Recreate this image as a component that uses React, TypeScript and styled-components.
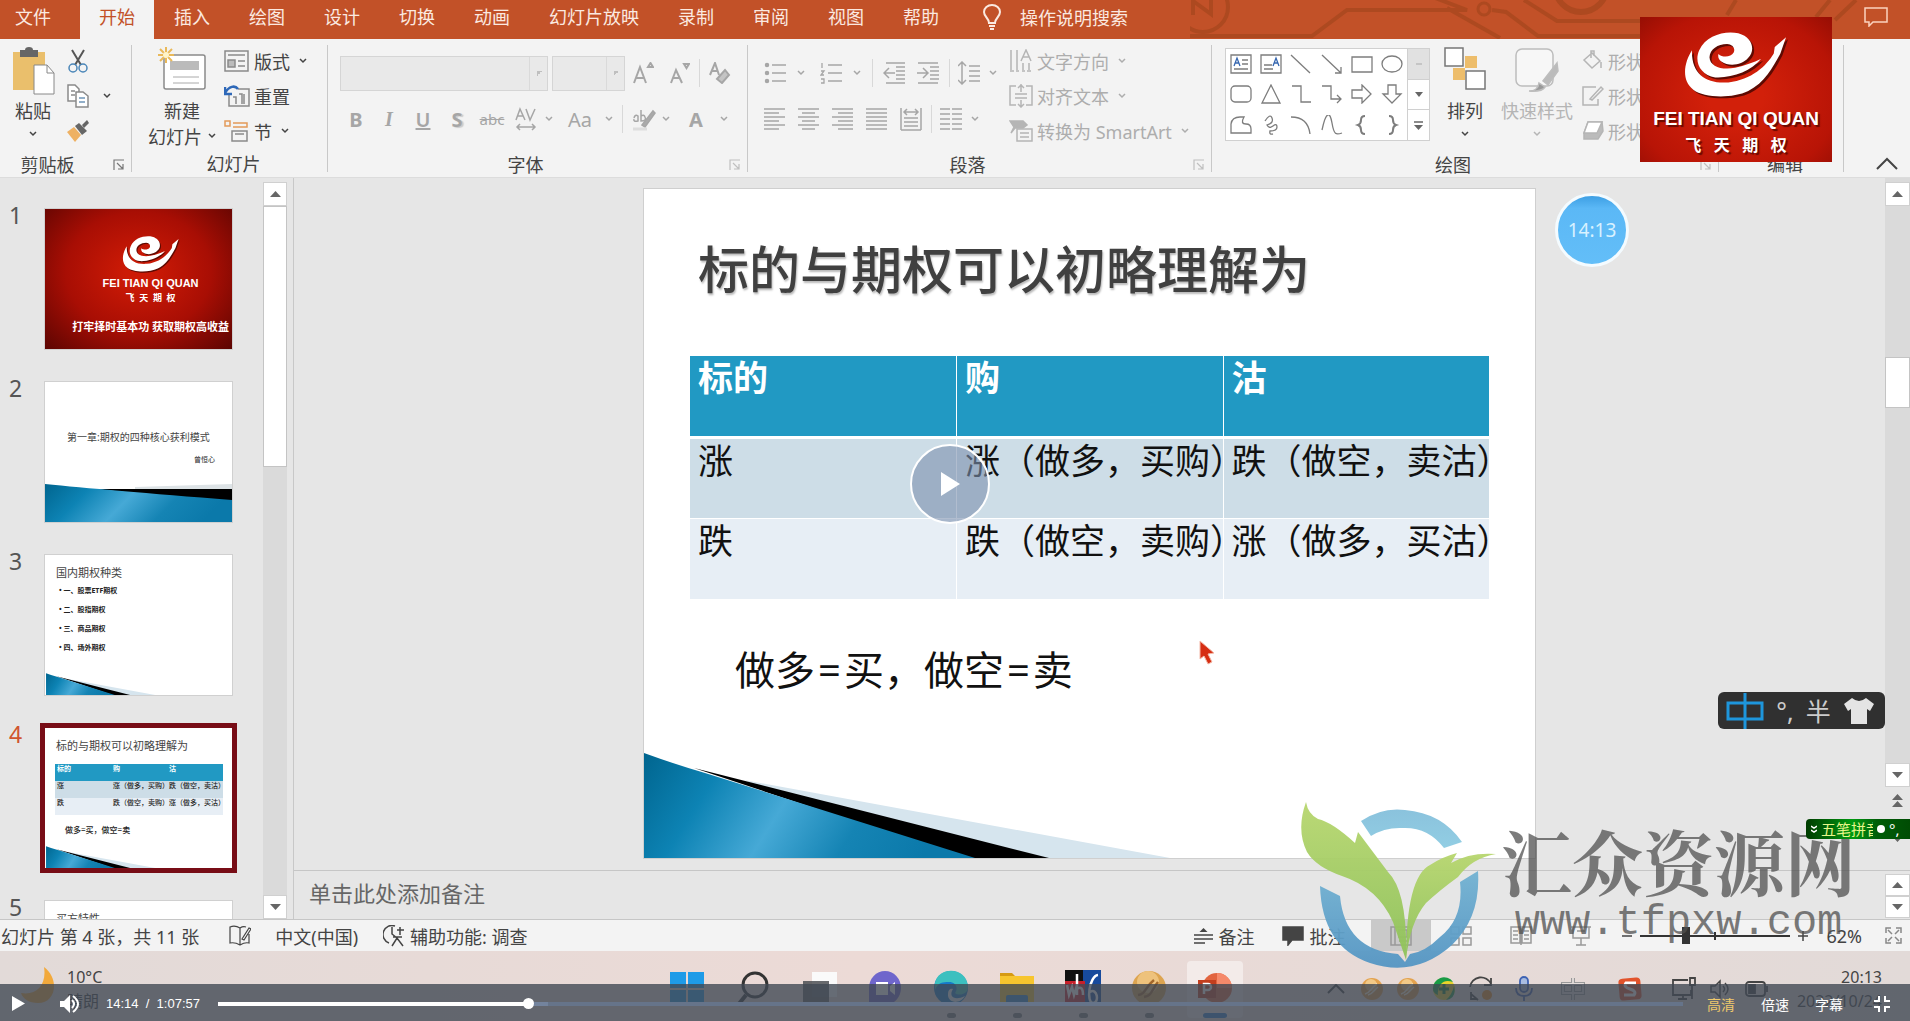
import React from "react";
import styled, { createGlobalStyle, css } from "styled-components";

const Global = createGlobalStyle`
  * { box-sizing: border-box; }
  body { margin: 0; background: #e6e6e6; }
  body, button, input, select, textarea, table {
    font-family: "Noto Sans", "Noto Sans CJK SC", sans-serif;
  }
  button { border: 0; padding: 0; margin: 0; background: none; color: inherit; font-size: inherit; }
  svg { display: block; flex: none; }
`;

const Page = styled.div`
  position: relative;
  display: flex;
  flex-direction: column;
  height: 100vh;
  overflow: hidden;
  color: #444;
  font-size: 18px;
  line-height: 24px;
`;

/* ---------- tab bar ---------- */
const TabBar = styled.header`
  position: relative;
  flex: none;
  display: flex;
  height: 39px;
  background: #c25128;
`;
const Circuit = styled.svg`
  position: absolute;
  top: 0;
  right: 0;
`;
const Tabs = styled.nav`
  display: flex;
  gap: 1px;
`;
const Tab = styled.button<{ $active?: boolean; $first?: boolean }>`
  padding: 0 19px 7px ${(p) => (p.$first ? 15 : 19)}px;
  min-width: ${(p) => (p.$first ? 79 : 0)}px;
  text-align: left;
  white-space: nowrap;
  color: ${(p) => (p.$active ? "#c25128" : "#fbe9e0")};
  background: ${(p) => (p.$active ? "#f3f3f3" : "transparent")};
`;
const Tell = styled.button`
  display: flex;
  align-items: center;
  gap: 19px;
  margin-left: 25px;
  padding-bottom: 6px;
  color: #fbe9e0;
`;
const CommentBtn = styled.button`
  position: relative;
  margin-left: auto;
  padding: 0 22px 5px 0;
  color: #fbd2bf;
`;

/* ---------- ribbon ---------- */
const Ribbon = styled.section`
  flex: none;
  display: flex;
  height: 139px;
  background: #f3f3f3;
  border-bottom: 1px solid #dcdcdc;
`;
const Group = styled.div<{ $w: number }>`
  flex: none;
  width: ${(p) => p.$w}px;
  display: flex;
  flex-direction: column;
  justify-content: space-between;
  padding-top: 4px;
  background: linear-gradient(#c8c8c8, #c8c8c8) right 6px / 1px 127px no-repeat;
`;
const GroupBody = styled.div<{ $pl?: number }>`
  display: flex;
  padding-left: ${(p) => p.$pl ?? 0}px;
`;
const GroupFoot = styled.div<{ $gap?: number }>`
  display: flex;
  align-items: center;
  height: 25px;
  padding-right: 7px;
  gap: ${(p) => p.$gap ?? 6}px;
  text-align: center;
  & > span { flex: 1; }
`;
const GroupFootPlain = styled.div`
  height: 25px;
  padding-left: 7px;
  text-align: center;
`;
const RibbonEnd = styled.div`
  flex: 1;
  display: flex;
  align-items: flex-end;
  justify-content: flex-end;
  padding: 0 12px 6px;
`;
const Stack = styled.div<{ $w?: number }>`
  display: flex;
  flex-direction: column;
  width: ${(p) => (p.$w ? p.$w + "px" : "auto")};
`;
const Row = styled.div<{ $h: number; $mt?: number }>`
  display: flex;
  align-items: center;
  height: ${(p) => p.$h}px;
  margin-top: ${(p) => p.$mt ?? 0}px;
`;
const BigBtn = styled.button<{ $w: number; $off?: boolean }>`
  width: ${(p) => p.$w}px;
  display: flex;
  flex-direction: column;
  align-items: center;
  padding-top: 4px;
  color: ${(p) => (p.$off ? "#b5b5b5" : "#444")};
  white-space: nowrap;
`;
const BigIcon = styled.span`
  height: 50px;
`;
const Inline = styled.span`
  display: flex;
  align-items: center;
  gap: 6px;
`;
const SmallBtn = styled.button<{ $off?: boolean }>`
  display: flex;
  align-items: center;
  gap: 4px;
  height: 35px;
  white-space: nowrap;
  color: ${(p) => (p.$off ? "#adadad" : "#444")};
  & > svg:first-child { color: ${(p) => (p.$off ? "#b5b5b5" : "#8a8a8a")}; }
`;
const Tool = styled.button<{ $w: number }>`
  display: flex;
  align-items: center;
  justify-content: center;
  width: ${(p) => p.$w}px;
  height: 32px;
  color: #a6a6a6;
`;
const Glyph = styled.span<{ $k?: "b" | "i" | "u" | "s" | "x" }>`
  font-size: 20px;
  ${(p) => p.$k === "b" && css`font-weight: 700;`}
  ${(p) => p.$k === "i" && css`font-style: italic; font-family: "Liberation Serif", serif; font-weight: 700;`}
  ${(p) => p.$k === "u" && css`font-weight: 600; text-decoration: underline;`}
  ${(p) => p.$k === "s" && css`font-weight: 700; text-shadow: 2px 1px 1px #ccc;`}
  ${(p) => p.$k === "x" && css`font-size: 15px; text-decoration: line-through;`}
`;
const Sep = styled.span<{ $w: number }>`
  width: ${(p) => p.$w}px;
  height: 28px;
  background: linear-gradient(#d8d8d8, #d8d8d8) center / 1px 100% no-repeat;
`;
const Pick = styled.select<{ $w: number }>`
  appearance: none;
  width: ${(p) => p.$w}px;
  height: 35px;
  margin-right: 4px;
  border: 1px solid #c9c9c9;
  border-radius: 0;
  background: linear-gradient(#d0d0d0, #d0d0d0) right 17px top / 1px 100% no-repeat,
    linear-gradient(135deg, #aaa 50%, transparent 50%) right 5px center / 5px 5px no-repeat, #e6e6e6;
  &:last-of-type { margin-right: 0; }
`;
const Gallery = styled.div`
  display: flex;
  width: 205px;
  height: 93px;
  margin-top: 5px;
  border: 1px solid #d0d0d0;
  background: #fff;
`;
const Shapes = styled.div`
  flex: 1;
  display: grid;
  grid-template-columns: repeat(6, 1fr);
  align-items: center;
  justify-items: center;
  color: #7d7d7d;
`;
const GalleryNav = styled.div`
  width: 22px;
  display: flex;
  flex-direction: column;
  border-left: 1px solid #d0d0d0;
`;
const GalleryBtn = styled.button<{ $off?: boolean }>`
  flex: 1;
  display: grid;
  place-items: center;
  background: ${(p) => (p.$off ? "#e1e1e1" : "#fff")};
  color: ${(p) => (p.$off ? "#bbb" : "#666")};
  & + & { border-top: 1px solid #d0d0d0; }
`;

/* ---------- workspace ---------- */
const Work = styled.main`
  flex: 1;
  min-height: 0;
  display: flex;
  background: #e6e6e6;
`;
const Pane = styled.aside`
  flex: none;
  width: 294px;
  display: flex;
  justify-content: space-between;
  padding: 4px 6px 0 0;
  border-right: 1px solid #c8c8c8;
  overflow: hidden;
`;
const ThumbList = styled.ol`
  list-style: none;
  margin: 0;
  padding: 27px 0 0 9px;
  display: flex;
  flex-direction: column;
  gap: 33px;
`;
const ThumbItem = styled.li<{ $on?: boolean }>`
  flex: none;
  display: flex;
  align-items: flex-start;
  font-size: 23px;
  line-height: 12px;
  color: ${(p) => (p.$on ? "#d0552f" : "#555")};
  & > span { width: 36px; }
`;
const Thumb = styled.button<{ $on?: boolean; $red?: boolean }>`
  position: relative;
  display: flex;
  flex-direction: column;
  width: 187px;
  height: 140px;
  text-align: left;
  overflow: hidden;
  white-space: nowrap;
  line-height: 12px;
  color: #222;
  background: ${(p) => (p.$red ? "radial-gradient(ellipse at 50% 45%, #cc1a06 10%, #a80e04 55%, #5c0502 100%)" : "#fff")};
  box-shadow: ${(p) => (p.$on ? "0 0 0 5px #780d16" : "0 0 0 1px #d0d0d0")};
`;
const TSwoosh = styled.svg`
  position: absolute;
  left: 0;
  bottom: 0;
`;
const TCover = styled.span`
  display: flex;
  flex-direction: column;
  align-items: center;
  align-self: flex-end;
  padding: 26px 3px 0 0;
  color: #fff;
  font-weight: 700;
`;
const TBrand = styled.span<{ $s: number; $mt?: number; $font?: string }>`
  font-size: ${(p) => p.$s}px;
  margin-top: ${(p) => p.$mt ?? 0}px;
  white-space: pre;
  ${(p) => p.$font && css`font-family: ${p.$font};`}
`;
const TTitle = styled.span<{ $center?: boolean }>`
  padding: ${(p) => (p.$center ? "49px 16px 0 22px" : "12px 0 0 11px")};
  font-size: ${(p) => (p.$center ? 10 : 11)}px;
  color: #444;
`;
const TAuthor = styled.span`
  padding: 11px 17px 0 0;
  text-align: right;
  font-size: 7px;
`;
const TBullets = styled.span`
  display: flex;
  flex-direction: column;
  gap: 7px;
  padding: 6px 0 0 14px;
  font-size: 7px;
  font-weight: 700;
`;
const TTable = styled.span`
  display: grid;
  grid-template-columns: repeat(3, 56px);
  grid-auto-rows: 17px;
  margin: 12px 0 0 10px;
  font-size: 7px;
  font-weight: 500;
  line-height: 10px;
  & > span { padding-left: 2px; background: #e7eef5; }
  & > span:nth-child(-n + 6) { background: #cddde7; }
  & > span:nth-child(-n + 3) { background: #2199c3; color: #fff; font-weight: 700; }
`;
const TFormula = styled.span`
  padding: 9px 0 0 20px;
  font-size: 8px;
  font-weight: 500;
`;

const Scroll = styled.div<{ $w: number }>`
  flex: none;
  width: ${(p) => p.$w}px;
  display: flex;
  flex-direction: column;
  background: #dadada;
`;
const ScrollBtn = styled.button`
  flex: none;
  height: 24px;
  display: grid;
  place-items: center;
  background: #fff;
  border: 1px solid #d0d0d0;
  color: #666;
`;
const ScrollThumb = styled.div<{ $h: number; $mt?: number }>`
  height: ${(p) => p.$h}px;
  margin-top: ${(p) => p.$mt ?? 0}px;
  background: #fff;
  border: 1px solid #c4c4c4;
`;
const Grow = styled.div`
  flex: 1;
`;
const PageBtns = styled.div`
  height: 83px;
  padding-top: 6px;
  display: flex;
  flex-direction: column;
  align-items: center;
  gap: 22px;
  background: #e6e6e6;
  color: #666;
`;

const Editor = styled.section`
  flex: 1;
  min-width: 0;
  display: flex;
  flex-direction: column;
`;
const StageRow = styled.div`
  flex: 1;
  min-height: 0;
  display: flex;
`;
const Stage = styled.div`
  flex: 1;
  min-width: 0;
  display: flex;
  justify-content: center;
  padding: 11px 0 12px;
`;
const Slide = styled.article`
  position: relative;
  height: 100%;
  aspect-ratio: 891 / 669;
  padding: 44px 45px 0 46px;
  background: #fff;
  box-shadow: 0 0 0 1px #cfcfcf;
  color: #111;
`;
const SlideArt = styled.svg`
  position: absolute;
  left: 0;
  bottom: 0;
  width: 100%;
  height: auto;
`;
const Title = styled.h1`
  margin: 0 0 51px 8px;
  font-size: 51px;
  line-height: 72px;
  font-weight: 500;
  color: #404040;
  text-shadow: 1px 2px 2px #bbb;
`;
const Grid = styled.table`
  width: 100%;
  table-layout: fixed;
  border-collapse: collapse;
  font-size: 35px;
  line-height: 44px;
  th, td {
    height: 81px;
    padding: 0 0 0 8px;
    text-align: left;
    vertical-align: top;
    white-space: nowrap;
    font-weight: 400;
    border-right: 1px solid #fff;
    border-bottom: 1px solid #fff;
  }
  td { background: #e7eef5; }
  tbody tr:first-child td { background: #cddde7; }
  th { background: #2199c3; color: #fff; font-weight: 700; border-bottom: 3px solid #fff; }
`;
const Formula = styled.p`
  display: flex;
  margin: 42px 0 0 45px;
  font-size: 40px;
  line-height: 56px;
`;
const Eq = styled.span`
  padding: 0 3px;
`;
const NotesRow = styled.div`
  display: flex;
  height: 49px;
  border-top: 1px solid #c6c6c6;
`;
const Notes = styled.textarea`
  flex: 1;
  border: 0;
  resize: none;
  outline: 0;
  background: transparent;
  padding: 7px 15px;
  font-size: 22px;
  line-height: 30px;
  overflow: hidden;
  &::placeholder { color: #666; opacity: 1; }
`;
const NotesScroll = styled.div`
  width: 25px;
  padding-top: 3px;
  button { width: 25px; height: 22px; }
`;

/* ---------- status bar ---------- */
const Status = styled.footer`
  flex: none;
  display: flex;
  align-items: center;
  height: 32px;
  background: #f3f3f3;
  border-top: 1px solid #c6c6c6;
  white-space: nowrap;
`;
const StatusItem = styled.button<{ $ml?: number }>`
  display: flex;
  align-items: center;
  gap: 5px;
  margin-left: ${(p) => p.$ml ?? 0}px;
`;
const Views = styled.div`
  display: flex;
  margin: 0 11px 0 26px;
`;
const ViewBtn = styled.button<{ $on?: boolean }>`
  display: grid;
  place-items: center;
  width: 60px;
  height: 31px;
  color: #999;
  background: ${(p) => (p.$on ? "#c9c9c9" : "transparent")};
`;
const Zoom = styled.input`
  appearance: none;
  width: 150px;
  height: 18px;
  margin: 0 8px;
  background: linear-gradient(#333, #333) center / 100% 2px no-repeat,
    linear-gradient(#333, #333) center / 2px 8px no-repeat;
  &::-webkit-slider-thumb { appearance: none; width: 8px; height: 17px; background: #333; }
`;
const FitBtn = styled.button`
  margin: 0 8px 0 23px;
  color: #888;
`;

/* ---------- taskbar ---------- */
const TaskBar = styled.div`
  flex: none;
  display: grid;
  grid-template-columns: 1fr auto 1fr;
  height: 70px;
  padding: 10px 28px 0 20px;
  background: linear-gradient(90deg, #e2dad8, #ecdad6 45%, #e2dad8);
  font-size: 16px;
  line-height: 24px;
`;
const Weather = styled.div`
  display: flex;
  gap: 11px;
  align-items: flex-start;
  padding-top: 4px;
`;
const Apps = styled.div`
  display: flex;
  gap: 10px;
`;
const AppButton = styled.button<{ $on?: boolean }>`
  display: flex;
  flex-direction: column;
  align-items: center;
  justify-content: space-between;
  width: 56px;
  height: 57px;
  padding-top: 9px;
  border-radius: 4px;
  background: ${(p) => (p.$on ? "#f3ebe9" : "transparent")};
`;
const Dot = styled.span<{ $on?: boolean; $hide?: boolean }>`
  width: ${(p) => (p.$on ? 24 : 9)}px;
  height: 5px;
  border-radius: 3px;
  background: ${(p) => (p.$hide ? "transparent" : p.$on ? "#2f7fd0" : "#777")};
`;
const Tray = styled.div`
  display: flex;
  justify-content: flex-end;
  align-items: flex-start;
  color: #444;
`;
const TrayCell = styled.span<{ $w: number }>`
  display: grid;
  place-items: center;
  width: ${(p) => p.$w}px;
  height: 52px;
  padding-top: 3px;
`;
const Clock = styled.div`
  width: 103px;
  padding-top: 4px;
  text-align: right;
`;

/* ---------- overlays ---------- */
const Brand = styled.div`
  position: absolute;
  top: 17px;
  right: 78px;
  width: 192px;
  height: 145px;
  display: flex;
  flex-direction: column;
  align-items: center;
  padding-top: 13px;
  color: #fff;
  background: radial-gradient(ellipse at 50% 55%, #d2200a 20%, #b81406 75%, #960e04 100%);
  text-shadow: 2px 2px 1px #6a0a02;
`;
const BrandEn = styled.strong`
  padding-top: 9px;
  font-family: "Liberation Sans", sans-serif;
  font-weight: 700;
  font-size: 19px;
  line-height: 22px;
`;
const BrandCn = styled.span`
  padding-top: 3px;
  font-size: 16px;
  font-weight: 700;
  white-space: pre;
`;
const Bubble = styled.div`
  position: absolute;
  top: 193px;
  right: 281px;
  width: 74px;
  height: 74px;
  display: grid;
  place-items: center;
  border: 3px solid #f4fbff;
  border-radius: 50%;
  color: #d8f1ff;
  font-size: 19px;
  background: linear-gradient(#3d9fe4, #5bb8f6 18%, #63bef8);
`;
const Pointer = styled.svg`
  position: absolute;
  top: 640px;
  left: 1199px;
`;
const BigPlay = styled.button`
  position: absolute;
  top: 444px;
  left: 50%;
  margin-left: -45px;
  width: 80px;
  height: 80px;
  display: grid;
  place-items: center;
  border: 2px solid #fff;
  border-radius: 50%;
  background: rgba(125, 145, 175, 0.6);
`;
const Ime = styled.div`
  position: absolute;
  top: 692px;
  right: 25px;
  width: 167px;
  height: 37px;
  display: flex;
  align-items: center;
  justify-content: space-between;
  padding: 0 10px 0 8px;
  border-radius: 6px;
  background: #303030;
  color: #ccc;
  font-size: 25px;
`;
const GreenIme = styled.div`
  position: absolute;
  top: 819px;
  right: 0;
  width: 104px;
  height: 20px;
  display: flex;
  align-items: center;
  gap: 4px;
  padding-left: 5px;
  border-radius: 4px 0 0 4px;
  background: linear-gradient(90deg, #003c00, #009a10 45%, #005e08 68%, #004c04);
  color: #fff;
  font-size: 15px;
  line-height: 20px;
  overflow: hidden;
`;
const ImeName = styled.span`
  width: 52px;
  overflow: hidden;
  white-space: nowrap;
  color: #e8f58a;
`;
const Mark = styled.div`
  position: absolute;
  right: 54px;
  bottom: 51px;
  display: flex;
  gap: 4px;
  color: rgba(80, 80, 80, 0.75);
`;
const MarkText = styled.div`
  padding-top: 16px;
  text-align: center;
`;
const MarkName = styled.div`
  font-family: "Noto Serif CJK SC", "Noto Sans CJK SC", serif;
  font-weight: 700;
  font-size: 71px;
  line-height: 82px;
  white-space: nowrap;
`;
const MarkUrl = styled.div`
  font-family: "Liberation Mono", monospace;
  font-size: 42px;
  line-height: 46px;
`;
const Player = styled.div`
  position: absolute;
  left: 0;
  right: 0;
  bottom: 0;
  height: 37px;
  display: flex;
  align-items: center;
  padding: 2px 20px 0 12px;
  background: rgba(65, 72, 84, 0.8);
  color: #fff;
  font: 13px/20px "Liberation Sans", "Noto Sans CJK SC", sans-serif;
  button { font-size: 14px; font-family: inherit; }
`;
const VolBtn = styled.button`
  margin-left: 35px;
`;
const Time = styled.span`
  margin: 0 18px 0 26px;
  white-space: pre;
`;
const Seek = styled.input`
  appearance: none;
  flex: 1;
  min-width: 0;
  height: 12px;
  margin: 0 11px 0 0;
  background: linear-gradient(90deg, #fff 21%, #73839d 21%, #73839d 22.5%, #66748a 22.5%) center / 100% 4px no-repeat;
  &::-webkit-slider-thumb { appearance: none; width: 11px; height: 11px; border-radius: 50%; background: #fff; }
`;
const PlayerText = styled.button<{ $gold?: boolean }>`
  width: 54px;
  color: ${(p) => (p.$gold ? "#efc96c" : "#fff")};
`;
const ExitBtn = styled.button`
  margin-left: 18px;
`;

/* ---------- drawings ---------- */
type IcoProps = { w?: number; h?: number; box?: string; sw?: number; d?: string; children?: React.ReactNode };
const Ico = ({ w = 22, h = 22, box = "0 0 22 22", sw = 1.5, d, children }: IcoProps) => (
  <svg width={w} height={h} viewBox={box} fill="none" stroke="currentColor" strokeWidth={sw} aria-hidden="true">
    {d && <path d={d} />}
    {children}
  </svg>
);
const Chev = () => <Ico w={8} h={6} box="0 0 8 6" d="M1 1l3 3 3-3" />;
const ChevTool = ({ w }: { w: number }) => <Tool $w={w} aria-label="更多"><Chev /></Tool>;
const Tri = ({ up }: { up?: boolean }) => (
  <svg width="11" height="6" viewBox="0 0 11 6"><path fill="currentColor" d={up ? "M0 6L5.500 0 11 6z" : "M0 0h11L5.500 6z"} /></svg>
);
const Launcher = ({ dark }: { dark?: boolean }) => (
  <svg width="12" height="12" viewBox="0 0 12 12" fill="none" stroke={dark ? "#777" : "#c0c0c0"} strokeWidth="1.200"><path d="M1 11V1h10M4 4l6 6M10 5v5H5" /></svg>
);
const swirlPath =
  "M190 115C168 150 155 205 195 235C225 258 310 262 360 238C410 213 435 165 457 125L474 76L440 105L437 125C415 162 370 205 300 212C235 217 188 190 190 115Z" +
  "M399 141C370 178 310 200 260 197C215 190 196 150 212 115C232 70 290 55 330 64C374 76 382 115 360 138C340 162 300 164 280 150C270 144 268 134 270 126C282 138 308 136 316 122C322 108 312 97 296 96C268 96 244 112 243 136C244 164 280 176 320 168C350 162 376 152 399 141Z";
const Swirl = ({ w, h }: { w: number; h: number }) => (
  <svg width={w} height={h} viewBox="160 54 326 208">
    <path d={swirlPath} fill="#5e0a02" transform="translate(6 6)" />
    <path d={swirlPath} fill="#fff" />
  </svg>
);
const BlueFill = ({ id }: { id: string }) => (
  <linearGradient id={id} x1="0" y1="0" x2="1" y2="0.200">
    <stop offset="0" stopColor="#00658f" /><stop offset="0.250" stopColor="#0d83b4" />
    <stop offset="0.500" stopColor="#46a9d6" /><stop offset="0.750" stopColor="#1584b4" /><stop offset="1" stopColor="#0b79aa" />
  </linearGradient>
);
const WedgeShapes = ({ id }: { id: string }) => (
  <>
    <defs><BlueFill id={id} /></defs>
    <path d="M100 28L526 106H300z" fill="#d6e5ee" />
    <path d="M50 16L405 106H320z" fill="#000" />
    <path d="M0 1Q30 12 61 21L331 106H0z" fill={`url(#${id})`} />
  </>
);
const ThumbWedge = ({ id }: { id: string }) => (
  <TSwoosh width="187" height="22" viewBox="0 0 891 106"><WedgeShapes id={id} /></TSwoosh>
);
const Gold = () => (
  <svg width="24" height="24" viewBox="0 0 24 24"><circle cx="12" cy="12" r="11" fill="#e3a24e" /><circle cx="11" cy="8" r="6" fill="#f2c987" /><path d="M5 17c6-1 5-6 12-10M8 18c5-1 6-5 10-8" stroke="#fff3dc" strokeWidth="1.500" fill="none" /></svg>
);
const lines = (xs: [number, number][]) => xs.map(([a, b], i) => `M${a} ${2 + i * 4}H${b}`).join("");
const AlignIco = ({ k }: { k: "l" | "c" | "r" | "j" }) => {
  const m: Record<string, [number, number][]> = {
    l: [[0, 21], [0, 15], [0, 21], [0, 15], [0, 21], [0, 15]],
    c: [[0, 21], [4, 17], [0, 21], [4, 17], [0, 21], [4, 17]],
    r: [[0, 21], [6, 21], [0, 21], [6, 21], [0, 21], [6, 21]],
    j: [[0, 21], [0, 21], [0, 21], [0, 21], [0, 21], [0, 21]],
  };
  return <Ico h={24} box="0 0 22 24" d={lines(m[k])} />;
};
const shapeList: React.ReactNode[] = [
  <><path d="M1 1h20v18H1zM12 6h6M12 10h6M4 15h14" /><path d="M4 12l3-8 3 8M5 9h4" stroke="#3566b0" /></>,
  <><path d="M1 1h20v18H1zM4 15h9M4 11h8" /><path d="M13 12l3-8 3 8M14 9h4" stroke="#3566b0" /></>,
  <path d="M1 1l19 18" />, <path d="M1 1l19 18M20 13v6h-6" />, <path d="M1 3h20v15H1z" />, <ellipse cx="11" cy="10" rx="10" ry="8" />,
  <rect x="1" y="2" width="20" height="16" rx="4" />, <path d="M11 1l9 18H2z" />, <path d="M2 2h9v16h10" />, <path d="M1 2h9v13h10M16 11l4 4-4 4" />,
  <path d="M1 6h10V1l9 9-9 9v-5H1z" />, <path d="M7 1h8v9h5l-9 9-9-9h5z" />,
  <path d="M1 18V9q1-7 9-7h4q-4 7 2 7 5 0 5 5v4z" />, <path d="M5 6q5-8 7-3t-5 7q2 4 6 1t4 1-7 4q-1 4 3 3" />, <path d="M1 2q17 0 19 17" />,
  <path d="M1 15C5-4 9-4 11 8s4 12 10 10" />, <path d="M14 1q-4 0-4 4t-3 5q3 1 3 5t4 4" strokeWidth="2" />, <path d="M8 1q4 0 4 4t3 5q-3 1-3 5t-4 4" strokeWidth="2" />,
];
const shapeNames = ["文本框", "竖排文本框", "直线", "箭头", "矩形", "椭圆", "圆角矩形", "三角形", "肘形", "肘形箭头", "右箭头", "下箭头", "任意多边形", "自由曲线", "弧形", "曲线", "左大括号", "右大括号"];

const tabNames = ["插入", "绘图", "设计", "切换", "动画", "幻灯片放映", "录制", "审阅", "视图", "帮助"];

const TabStrip = () => (
  <TabBar>
    <Circuit width="720" height="39" viewBox="0 0 720 39" fill="none" stroke="#a9481f" strokeWidth="4" strokeOpacity="0.850">
      <circle cx="13" cy="7" r="25" /><path d="M3 15V1l18 13V-2M-40 36H122L157 10H277L240 -4M257 8L310 38M302 10L316 12 348 36H480M334 0L367 21H480M546 0L537 15M640 0L626 17M666 0L645 20" />
      <circle cx="294" cy="9" r="6" strokeWidth="3" />
      <circle cx="391" cy="-14" r="26" strokeWidth="6" />
    </Circuit>
    <Tabs aria-label="功能区">
      <Tab $first>文件</Tab>
      <Tab $active>开始</Tab>
      {tabNames.map((t) => <Tab key={t}>{t}</Tab>)}
    </Tabs>
    <Tell>
      <Ico w={18} h={26} box="0 0 18 26" sw={2} d="M6 19C6 14 1 13 1 8a8 7 0 0 1 16 0c0 5-5 6-5 11zM6 22h6M7 25h4" />
      操作说明搜索
    </Tell>
    <CommentBtn aria-label="批注"><Ico w={24} h={20} box="0 0 24 20" d="M1 1h22v14H9l-4 4v-4H1z" /></CommentBtn>
  </TabBar>
);

const RibbonBar = () => (
  <Ribbon>
    <Group $w={132}>
      <GroupBody>
        <BigBtn $w={66}>
          <BigIcon>
            <svg width="43" height="48" viewBox="0 0 43 48"><path d="M1 5h32v38H1z" fill="#eabf6c" /><path d="M8 3h5a4 3 0 0 1 8 0h5v7H8z" fill="#666" /><path d="M22 18h13l7 8v21H22z" fill="#fff" stroke="#888" /><path d="M35 18v8h7" fill="none" stroke="#888" /></svg>
          </BigIcon>
          粘贴
          <Row $h={22}><Chev /></Row>
        </BigBtn>
        <Stack>
          <SmallBtn aria-label="剪切"><Ico w={24} h={24} box="0 0 24 24"><path d="M6 1l9 15M18 1L9 16" stroke="#555" strokeWidth="2" /><circle cx="7" cy="19" r="4" stroke="#4a86b8" /><circle cx="17" cy="19" r="4" stroke="#4a86b8" /></Ico></SmallBtn>
          <SmallBtn aria-label="复制"><Ico w={24} h={24} box="0 0 24 24"><path d="M2 1h7l4 4v12H2z" fill="#fff" /><path d="M5 7h4M5 11h4" /><path d="M10 8h7l5 4v11H10z" fill="#fff" /><path d="M13 14h6M13 18h6" stroke="#6f95b8" /></Ico><Row $h={20}>&nbsp;&nbsp;<Chev /></Row></SmallBtn>
          <SmallBtn aria-label="格式刷"><svg width="24" height="24" viewBox="0 0 24 24"><path d="M1 13l7-5 7 8-6 7z" fill="#eeb163" /><path d="M9 7l4-3 8 8-5 4z" fill="#666" /><path d="M16 6l5-5 2 3-5 5z" fill="#666" /></svg></SmallBtn>
        </Stack>
      </GroupBody>
      <GroupFoot $gap={18}><span>剪贴板</span><Launcher dark /></GroupFoot>
    </Group>
    <Group $w={196}>
      <GroupBody $pl={8}>
        <BigBtn $w={84}>
          <BigIcon>
            <svg width="48" height="46" viewBox="0 0 48 46"><rect x="6" y="8" width="41" height="34" rx="2" fill="#fff" stroke="#8a8a8a" strokeWidth="1.500" /><path d="M12 14h29v9H12z" fill="#bbb" /><path d="M15 30h26M15 36h26" stroke="#aaa" /><path d="M8 0v16M0 8h16M2 2l12 12M14 2L2 14" stroke="#e9b95a" strokeWidth="2" /><circle cx="8" cy="8" r="3" fill="#fff4c8" /></svg>
          </BigIcon>
          新建
          <Inline>幻灯片 <Chev /></Inline>
        </BigBtn>
        <Stack>
          <SmallBtn><Ico w={26} box="0 0 26 22"><path d="M1 1h23v20H1zM4 5h17M14 11h7M14 16h7" /><path d="M4 10h7v7H4z" fill="#bbb" /></Ico>版式&nbsp;<Chev /></SmallBtn>
          <SmallBtn><Ico w={26} box="0 0 26 22"><path d="M14 4h11v17H5V10M9 12h3v7M15 9h3v10M20 9v10" /><path d="M1 2v7h7M1 8C5 1 11 0 14 4" stroke="#2e68b8" strokeWidth="2.500" /></Ico>重置</SmallBtn>
          <SmallBtn><Ico w={26} box="0 0 26 22"><path d="M1 1v5h5V1zM9 3h14v4H9" stroke="#e39a5a" /><path d="M8 11h15v10H8zM11 14h9" /></Ico>节&nbsp;<Chev /></SmallBtn>
        </Stack>
      </GroupBody>
      <GroupFootPlain>幻灯片</GroupFootPlain>
    </Group>
    <Group $w={420}>
      <GroupBody $pl={12}>
        <Stack>
          <Row $h={36} $mt={12}>
            <Pick $w={208} aria-label="字体" disabled /><Pick $w={73} aria-label="字号" disabled />
            <Tool $w={36} aria-label="增大字号"><Ico d="M2 21L8 5l6 16M4 16h8M16 5l2.500-4L21 5z" sw={2} /></Tool>
            <Tool $w={36} aria-label="减小字号"><Ico d="M3 21L8 8l6 13M5 16h7M16 2l2.500 4L21 2z" sw={2} /></Tool>
            <Sep $w={5} />
            <Tool $w={36} aria-label="清除格式"><Ico d="M1 13L6 1l4 12M3 9h6" sw={2}><path d="M8 17l8-9 4 5-7 8z" fill="#c4c4c4" /></Ico></Tool>
          </Row>
          <Row $h={36} $mt={10}>
            <Tool $w={32}><Glyph $k="b">B</Glyph></Tool>
            <Tool $w={34}><Glyph $k="i">I</Glyph></Tool>
            <Tool $w={34}><Glyph $k="u">U</Glyph></Tool>
            <Tool $w={34}><Glyph $k="s">S</Glyph></Tool>
            <Tool $w={36}><Glyph $k="x">abc</Glyph></Tool>
            <Tool $w={32} aria-label="字符间距"><Ico h={24} box="0 0 22 24" d="M1 13L5 2l5 11M2 9h6M11 2l4 11 5-11M2 20h18M5 17l-3 3 3 3M17 17l3 3-3 3" /></Tool>
            <ChevTool w={14} />
            <Tool $w={48}><Glyph>Aa</Glyph></Tool>
            <ChevTool w={10} /><Sep $w={16} />
            <Tool $w={28} aria-label="突出显示"><Ico w={24} h={24} box="0 0 24 24"><path d="M2 11q1-4 4-2v5q-5 1-4-2M9 3v11q6 0 4-4-1-3-4-1" /><path d="M10 18L21 4l2 2-10 14z" fill="#aaa" /><path d="M1 22h14" stroke="#ddd" strokeWidth="3" /></Ico></Tool>
            <ChevTool w={16} />
            <Tool $w={44}><Glyph $k="b">A</Glyph></Tool>
            <ChevTool w={12} />
          </Row>
        </Stack>
      </GroupBody>
      <GroupFoot><span>字体</span><Launcher /></GroupFoot>
    </Group>
    <Group $w={464}>
      <GroupBody $pl={12}>
        <Stack $w={249}>
          <Row $h={36} $mt={12}>
            <Tool $w={30} aria-label="项目符号"><Ico d="M8 3h14M8 11h14M8 19h14"><g fill="currentColor"><circle cx="3" cy="3" r="1.500" /><circle cx="3" cy="11" r="1.500" /><circle cx="3" cy="19" r="1.500" /></g></Ico></Tool>
            <ChevTool w={22} />
            <Tool $w={38} aria-label="编号"><Ico d="M8 3h14M8 11h14M8 19h14M2 1v5M1 9h3l-3 4h3M1 17h3v4H1" sw={1.3} /></Tool>
            <ChevTool w={14} /><Sep $w={16} />
            <Tool $w={28} aria-label="减少缩进"><Ico d="M3 1h19M13 5h9M13 9h9M13 13h9M13 17h9M3 21h19M12 11H1M6 6l-5 5 5 5" /></Tool>
            <Tool $w={40} aria-label="增加缩进"><Ico d="M1 1h20M13 5h9M13 9h9M13 13h9M13 17h9M1 21h20M0 11h10M6 6l5 5-5 5" /></Tool>
            <Sep $w={2} />
            <Tool $w={38} aria-label="行距"><Ico h={24} box="0 0 22 24" d="M4 1v22M0 5l4-4 4 4M0 19l4 4 4-4M11 5h11M11 10h11M11 15h11M11 20h11" /></Tool>
            <ChevTool w={10} />
          </Row>
          <Row $h={36} $mt={10}>
            <Tool $w={30} aria-label="左对齐"><AlignIco k="l" /></Tool>
            <Tool $w={38} aria-label="居中"><AlignIco k="c" /></Tool>
            <Tool $w={30} aria-label="右对齐"><AlignIco k="r" /></Tool>
            <Tool $w={38} aria-label="两端对齐"><AlignIco k="j" /></Tool>
            <Tool $w={30} aria-label="分散对齐"><Ico h={24} box="0 0 22 24" d="M1 1v22M21 1v22M4 5h14M7 2L4 5l3 3M15 2l3 3-3 3M4 11h14M4 15h14M4 19h14M1 23h20" /></Tool>
            <Sep $w={10} />
            <Tool $w={30} aria-label="分栏"><Ico h={24} box="0 0 22 24" d="M0 2h10M12 2h10M0 7h10M12 7h10M0 12h10M12 12h10M0 17h10M12 17h10M0 22h10M12 22h10" /></Tool>
            <ChevTool w={18} />
          </Row>
        </Stack>
        <Stack>
          <SmallBtn $off><Ico w={24} h={24} box="0 0 24 24" d="M2 1v20M8 1v20M14 14v7M20 14v7M12 12l5-11 5 11M14 8h6M1 22h4M7 22h3M13 22h3M18 22h4" />文字方向&nbsp;<Chev /></SmallBtn>
          <SmallBtn $off><Ico w={24} h={24} box="0 0 24 24" d="M7 2H1v19h6M17 2h6v19h-6M12 0v8M9 4l3-3 3 3M12 16v8M9 20l3 3 3-3M6 10h12M6 14h12" />对齐文本&nbsp;<Chev /></SmallBtn>
          <SmallBtn $off><Ico w={24} box="0 0 24 22"><path d="M1 1h13l4 4-4 3H6l-4 5 3-6z" fill="#b5b5b5" /><path d="M8 9h15v12H8zM11 13h9M11 17h9" fill="#f3f3f3" /></Ico>转换为 SmartArt&nbsp;<Chev /></SmallBtn>
        </Stack>
      </GroupBody>
      <GroupFoot><span>段落</span><Launcher /></GroupFoot>
    </Group>
    <Group $w={507}>
      <GroupBody $pl={13}>
        <Gallery>
          <Shapes>
            {shapeList.map((s, i) => <button key={i} aria-label={shapeNames[i]}><Ico h={20} box="0 0 22 20" sw={1.3}>{s}</Ico></button>)}
          </Shapes>
          <GalleryNav>
            <GalleryBtn $off aria-label="上一行"><Ico w={6} h={4} box="0 0 6 4" d="M0 2h6" /></GalleryBtn>
            <GalleryBtn aria-label="下一行"><Ico w={8} h={5} box="0 0 8 5"><path d="M0 0h8L4 5z" fill="currentColor" stroke="none" /></Ico></GalleryBtn>
            <GalleryBtn aria-label="其他"><Ico w={9} h={9} box="0 0 9 9"><path d="M0 1h9" /><path d="M0 4h9L4.500 9z" fill="currentColor" stroke="none" /></Ico></GalleryBtn>
          </GalleryNav>
        </Gallery>
        <BigBtn $w={70}>
          <BigIcon>
            <svg width="42" height="44" viewBox="0 0 42 44"><path d="M21 9h12v12H21zM9 21h12v12H9z" fill="#edbd6b" /><path d="M1 1h18v18H1zM22 24h19v18H22z" fill="#fff" stroke="#777" strokeWidth="1.500" /></svg>
          </BigIcon>
          排列
          <Row $h={22}><Chev /></Row>
        </BigBtn>
        <BigBtn $w={74} $off>
          <BigIcon>
            <svg width="44" height="46" viewBox="0 0 44 46" fill="none" stroke="#bdbdbd" strokeWidth="1.500"><rect x="1" y="2" width="37" height="37" rx="6" fill="#f7f7f7" /><path d="M42 16L28 34l5 4L43 24z" fill="#bbb" /><path d="M14 44q9 0 10-8l6 4q-3 5-16 4z" fill="#999" /></svg>
          </BigIcon>
          快速样式
          <Row $h={22}><Chev /></Row>
        </BigBtn>
        <ShapeStack>
          <SmallBtn $off><Ico d="M2 10l8-7 8 8-8 7zM9 8V1h3v5M19 12v6" />形状填充</SmallBtn>
          <SmallBtn $off><Ico d="M14 2H1v18h15v-6M8 14L19 2l2 2L10 15z" />形状轮廓</SmallBtn>
          <SmallBtn $off><Ico><path d="M6 2h14l1 9-5 8H2V13z" fill="#bbb" /><path d="M6 2h14l-5 11H2z" fill="#fff" /></Ico>形状效果</SmallBtn>
        </ShapeStack>
      </GroupBody>
      <GroupFoot><span>绘图</span><Launcher /></GroupFoot>
    </Group>
    <Group $w={125}>
      <GroupBody />
      <GroupFootPlain>编辑</GroupFootPlain>
    </Group>
    <RibbonEnd><button aria-label="折叠功能区"><Ico w={22} h={14} box="0 0 22 14" sw={2} d="M1 12L11 2l10 10" /></button></RibbonEnd>
  </Ribbon>
);
const ShapeStack = styled(Stack)`
  margin-left: 8px;
`;

const CoverBox = styled.span`
  display: flex;
  flex-direction: column;
  align-items: center;
`;
const ThumbPane = () => (
  <Pane>
    <ThumbList>
      <ThumbItem><span>1</span>
        <Thumb $red>
          <TCover>
            <CoverBox>
              <Swirl w={60} h={38} />
              <TBrand $s={11} $mt={4} $font={'"Liberation Sans", sans-serif'}>FEI TIAN QI QUAN</TBrand>
              <TBrand $s={9} $mt={3}>飞  天  期  权</TBrand>
            </CoverBox>
            <TBrand $s={11} $mt={17}>打牢择时基本功 获取期权高收益</TBrand>
          </TCover>
        </Thumb>
      </ThumbItem>
      <ThumbItem><span>2</span>
        <Thumb>
          <TTitle $center>第一章:期权的四种核心获利模式</TTitle>
          <TAuthor>曾恒心</TAuthor>
          <TSwoosh width="187" height="38" viewBox="0 0 187 38"><defs><BlueFill id="b2" /></defs><path d="M90 3L187 0v8H90z" fill="#dde3e6" /><path d="M50 5H187v14z" fill="#000" /><path d="M0 0Q60 6 187 16V38H0z" fill="url(#b2)" /></TSwoosh>
        </Thumb>
      </ThumbItem>
      <ThumbItem><span>3</span>
        <Thumb>
          <TTitle>国内期权种类</TTitle>
          <TBullets><span>• 一、股票ETF期权</span><span>• 二、股指期权</span><span>• 三、商品期权</span><span>• 四、场外期权</span></TBullets>
          <ThumbWedge id="b3" />
        </Thumb>
      </ThumbItem>
      <ThumbItem $on><span>4</span>
        <Thumb $on>
          <TTitle>标的与期权可以初略理解为</TTitle>
          <TTable>
            <span>标的</span><span>购</span><span>沽</span>
            <span>涨</span><span>涨（做多，买购）</span><span>跌（做空，卖沽）</span>
            <span>跌</span><span>跌（做空，卖购）</span><span>涨（做多，买沽）</span>
          </TTable>
          <TFormula>做多=买，做空=卖</TFormula>
          <ThumbWedge id="b4" />
        </Thumb>
      </ThumbItem>
      <ThumbItem><span>5</span><Thumb><TTitle>买方特性</TTitle></Thumb></ThumbItem>
    </ThumbList>
    <Scroll $w={24}>
      <ScrollBtn aria-label="向上"><Tri up /></ScrollBtn>
      <ScrollThumb $h={261} />
      <Grow />
      <ScrollBtn aria-label="向下"><Tri /></ScrollBtn>
    </Scroll>
  </Pane>
);

const EditorArea = () => (
  <Editor>
    <StageRow>
      <Stage>
        <Slide>
          <SlideArt viewBox="0 0 891 106"><WedgeShapes id="main" /></SlideArt>
          <Title>标的与期权可以初略理解为</Title>
          <Grid>
            <thead><tr><th>标的</th><th>购</th><th>沽</th></tr></thead>
            <tbody>
              <tr><td>涨</td><td>涨（做多，买购）</td><td>跌（做空，卖沽）</td></tr>
              <tr><td>跌</td><td>跌（做空，卖购）</td><td>涨（做多，买沽）</td></tr>
            </tbody>
          </Grid>
          <Formula>做多<Eq>=</Eq>买，做空<Eq>=</Eq>卖</Formula>
        </Slide>
      </Stage>
      <Scroll $w={25}>
        <Row $h={4} />
        <ScrollBtn aria-label="向上"><Tri up /></ScrollBtn>
        <ScrollThumb $h={51} $mt={151} />
        <Grow />
        <ScrollBtn aria-label="向下"><Tri /></ScrollBtn>
        <PageBtns>
          <button aria-label="上一张"><Ico w={11} h={14} box="0 0 11 14"><path d="M0 7l5.500-6L11 7zM0 14l5.500-6 5.500 6z" fill="currentColor" stroke="none" /></Ico></button>
          <button aria-label="下一张"><Ico w={11} h={14} box="0 0 11 14"><path d="M0 0h11L5.500 6zM0 7h11l-5.500 6z" fill="currentColor" stroke="none" /></Ico></button>
        </PageBtns>
      </Scroll>
    </StageRow>
    <NotesRow>
      <Notes aria-label="备注" placeholder="单击此处添加备注" />
      <NotesScroll>
        <ScrollBtn aria-label="向上"><Tri up /></ScrollBtn>
        <ScrollBtn aria-label="向下"><Tri /></ScrollBtn>
      </NotesScroll>
    </NotesRow>
  </Editor>
);

const StatusBar = () => (
  <Status>
    <StatusItem $ml={1}>幻灯片 第 4 张，共 11 张</StatusItem>
    <StatusItem $ml={30} aria-label="拼写检查"><Ico d="M11 3v17M11 3Q6 0 1 2v16q5-1 10 2M11 3q3-2 6-1M11 20q5-3 9-2V9M13 14l7-11 2 1-7 11z" sw={1.2} /></StatusItem>
    <StatusItem $ml={24}>中文(中国)</StatusItem>
    <StatusItem $ml={25}><Ico d="M12 1A9 9 0 0 0 6 18M9 2v7l5 4M14 5h7M17 2v8M9 21l5-8 6 8M10 12h9" />辅助功能: 调查</StatusItem>
    <Grow />
    <StatusItem><Ico w={19} h={18} box="0 0 19 18"><path d="M9.500 1l4 4h-8z" fill="currentColor" stroke="none" /><path d="M0 8h19M0 12h19M0 16h11" /></Ico>备注</StatusItem>
    <StatusItem $ml={28}><Ico w={22} h={20} box="0 0 22 20"><path d="M1 1h20v13H10l-4 5v-5H1z" fill="currentColor" /></Ico>批注</StatusItem>
    <Views>
      <ViewBtn $on aria-label="普通视图"><Ico h={20} box="0 0 22 20" d="M1 1h20v18H1zM5 1v18M9 4h8v7H9zM9 15h9" /></ViewBtn>
      <ViewBtn aria-label="幻灯片浏览"><Ico h={20} box="0 0 22 20" d="M1 1h8v7H1zM13 1h8v7h-8zM1 12h8v7H1zM13 12h8v7h-8z" /></ViewBtn>
      <ViewBtn aria-label="阅读视图"><Ico h={20} box="0 0 22 20" d="M11 2v17M1 1h9v16H1zM12 1h9v16h-9zM3 5h5M3 9h5M3 13h5M14 5h5M14 9h5M14 13h5" /></ViewBtn>
      <ViewBtn aria-label="幻灯片放映"><Ico h={20} box="0 0 22 20" d="M1 1h20M3 1v11h16V1M11 12v7M6 19h10M7 5h8" /></ViewBtn>
    </Views>
    <button aria-label="缩小"><Ico w={10} h={10} box="0 0 10 10" d="M0 5h10" /></button>
    <Zoom type="range" min={0} max={100} defaultValue={29} aria-label="缩放" />
    <button aria-label="放大"><Ico w={10} h={10} box="0 0 10 10" d="M0 5h10M5 0v10" /></button>
    <StatusItem $ml={18}>62%</StatusItem>
    <FitBtn aria-label="适应窗口"><Ico w={17} h={17} box="0 0 17 17" d="M1 6V1h5M11 1h5v5M16 11v5h-5M6 16H1v-5M3 3l4 4M14 3l-4 4M3 14l4-4M14 14l-4-4" /></FitBtn>
  </Status>
);

const appIcons: { n: string; dot?: boolean; on?: boolean; art: React.ReactNode }[] = [
  { n: "开始", art: <path d="M1 2h16v16H1zM19 2h16v16H19zM1 20h16v16H1zM19 20h16v16H19z" fill="#1e9be8" /> },
  { n: "搜索", art: <g fill="none" stroke="#333"><circle cx="20" cy="15" r="12" strokeWidth="3" /><path d="M11 25L3 35" strokeWidth="4" /></g> },
  { n: "任务视图", art: <><path d="M11 2h25v25H11z" fill="#fafafa" /><path d="M2 11h26v25H2z" fill="#4c4f54" fillOpacity="0.850" /></> },
  { n: "聊天", art: <><path d="M2 35V18a16 17 0 1 1 16 17z" fill="#6f66cc" /><path d="M9 12h12v13H9zM23 16l5-4v13l-5-4z" fill="#fff" /></> },
  { n: "Edge", dot: true, art: <><circle cx="18" cy="18" r="17" fill="#157bc9" /><path d="M2 13C5-4 34-4 35 17c0 8-10 9-13 6 4-6 0-11-6-11S5 12 2 20z" fill="#3cc0bf" /><path d="M20 19c-5 8 2 12 12 7-6 10-18 6-17-2 0-4 2-6 5-5z" fill="#e9eef2" /></> },
  { n: "文件资源管理器", dot: true, art: <><path d="M1 3h12l4 4H1z" fill="#d69a13" /><path d="M1 6h34v28H1z" fill="#f7c52e" /><path d="M7 35v-8q0-2 2-2h18q2 0 2 2v8z" fill="#2f86cf" /></> },
  { n: "wh6", dot: true, art: <><path d="M0 0h18v36H0z" fill="#111" /><path d="M18 0h18v36H18z" fill="#174a9c" /><path d="M0 11h20v22H0z" fill="#c7202a" /><path d="M2 15l2 10 3-8 2 8 3-10M12 4v21M12 19q6-4 6 6" fill="none" stroke="#fff" strokeWidth="2.500" /><path d="M33 5C24 6 21 33 28 33S32 17 25 22" fill="none" stroke="#fff" strokeWidth="2.500" /></> },
  { n: "行情", dot: true, art: <><circle cx="18" cy="18" r="17" fill="#dda450" /><circle cx="17" cy="12" r="11" fill="#eec27c" /><path d="M7 25c8-1 7-8 16-15M13 27c8-1 8-8 14-15" fill="none" stroke="#a3672a" strokeWidth="2.500" /></> },
  { n: "PowerPoint", on: true, art: <><circle cx="20" cy="18" r="15" fill="#e2643f" /><path d="M20 3a15 15 0 0 1 15 15H20z" fill="#f5896a" /><path d="M1 10h18v18H1z" fill="#c23e1e" /><path d="M7 24V14h4a3 3 0 0 1 0 6H7" fill="none" stroke="#fff" strokeWidth="2.500" /></> },
];

const Tasks = () => (
  <TaskBar>
    <Weather>
      <svg width="36" height="42" viewBox="0 0 36 42"><path d="M24 2C40 14 36 38 18 38C9 38 3 34 1 28C16 31 27 20 24 2z" fill="#f2a93b" /></svg>
      <div>10°C<br />晴朗</div>
    </Weather>
    <Apps>
      {appIcons.map((a) => (
        <AppButton key={a.n} $on={a.on} aria-label={a.n}>
          <svg width="36" height="38" viewBox="0 0 36 38">{a.art}</svg>
          <Dot $on={a.on} $hide={!a.dot && !a.on} />
        </AppButton>
      ))}
    </Apps>
    <Tray>
      <TrayCell $w={36}><Ico w={18} h={10} box="0 0 18 10" sw={2} d="M1 9l8-8 8 8" /></TrayCell>
      <TrayCell $w={36}><Gold /></TrayCell>
      <TrayCell $w={36}><Gold /></TrayCell>
      <TrayCell $w={36}><svg width="24" height="24" viewBox="0 0 24 24"><circle cx="12" cy="12" r="11" fill="#e8d32c" /><path d="M1 12A11 11 0 0 1 21 5q-8-3-12 2t-3 11Q1 16 1 12z" fill="#199b45" /><path d="M22 9q3 12-8 14 6-5 8-14z" fill="#199b45" /><path d="M12 7v10M7 12h10" stroke="#137c36" strokeWidth="3" /></svg></TrayCell>
      <TrayCell $w={38}><Ico w={26} h={26} box="0 0 26 26" sw={1.8}><path d="M2 11A11 11 0 0 1 23 8M23 2v7h-7M3 16v7h6M3 18l7 6" /><circle cx="19" cy="19" r="5" fill="#e88b1e" stroke="none" /></Ico></TrayCell>
      <TrayCell $w={48}><svg width="18" height="26" viewBox="0 0 18 26" fill="none" stroke="#3d62b3" strokeWidth="1.800"><rect x="5" y="1" width="8" height="15" rx="4" fill="#a9bcdf" /><path d="M1 12q0 8 8 8t8-8M9 20v5" /></svg></TrayCell>
      <TrayCell $w={50}><Ico w={24} h={24} box="0 0 24 24" sw={4}><g stroke="#999"><path d="M2 7h20v9H2zM12 1v22" /></g><path d="M2 7h20v9H2zM12 1v22" stroke="#e4dddb" strokeWidth="1.800" /></Ico></TrayCell>
      <TrayCell $w={64}><svg width="24" height="24" viewBox="0 0 24 24"><rect x="1" y="1" width="22" height="22" rx="4" fill="#e2532b" transform="rotate(-5 12 12)" /><path d="M18 6H8q-3 4 4 6t4 6H6" fill="none" stroke="#fff" strokeWidth="3" /></svg></TrayCell>
      <TrayCell $w={43}><Ico w={26} h={24} box="0 0 26 24" sw={1.8} d="M17 3H2v15h18v-5M7 22h9M12 18v4M19 1h5v7h-5zM21 8v14" /></TrayCell>
      <TrayCell $w={30}><Ico w={20} h={20} box="0 0 20 20" d="M1 7h4l5-5v16l-5-5H1zM13 7q3 3 0 6M15 4q6 6 0 12" /></TrayCell>
      <TrayCell $w={44}><Ico w={24} h={16} box="0 0 24 16" sw={1.800}><rect x="1" y="1" width="19" height="14" rx="3" /><path d="M4 4h6v8H4z" fill="#444" /><path d="M22 5v6" /></Ico></TrayCell>
      <Clock>20:13<br />2022/10/24</Clock>
    </Tray>
  </TaskBar>
);

const Watermark = () => (
  <Mark>
    <svg width="197" height="168" viewBox="0 0 197 168" fillOpacity="0.950">
      <defs>
        <linearGradient id="ringTop" x1="0" y1="0" x2="0" y2="1"><stop offset="0" stopColor="#84bfdb" /><stop offset="1" stopColor="#8ccbe2" /></linearGradient>
        <linearGradient id="ringLow" x1="0" y1="0" x2="0" y2="1"><stop offset="0" stopColor="#72b2d2" /><stop offset="1" stopColor="#5495c3" /></linearGradient>
        <linearGradient id="leaf" x1="0" y1="0" x2="0" y2="1"><stop offset="0" stopColor="#b7d66e" /><stop offset="1" stopColor="#8ec25a" /></linearGradient>
      </defs>
      <path d="M61 19Q82 5 105 8Q142 11 162 40L144 46Q128 25 103 26Q85 25 71 34z" fill="url(#ringTop)" />
      <path d="M20 84Q22 145 70 161Q115 176 152 143Q181 115 178 69L160 80Q164 116 140 135Q125 150 110 152L105 160L98 152Q45 148 40 94z" fill="url(#ringLow)" />
      <path d="M6 0Q-4 28 7 50Q16 65 42 74Q78 86 93 120L106 158Q108 90 88 70L58 30L55 41Q32 20 18 17Q8 12 6 0z" fill="url(#leaf)" />
      <path d="M106 158Q106 75 130 63Q142 55 157 51L151 61Q170 50 196 52Q172 56 158 75Q140 88 126 101Q110 120 106 158z" fill="url(#leaf)" />
    </svg>
    <MarkText>
      <MarkName>汇众资源网</MarkName>
      <MarkUrl>www.tfpxw.com</MarkUrl>
    </MarkText>
  </Mark>
);

const PlayerBar = () => (
  <Player>
    <button aria-label="播放"><svg width="13" height="15" viewBox="0 0 13 15"><path d="M0 0l13 7.500L0 15z" fill="#fff" /></svg></button>
    <VolBtn aria-label="音量"><svg width="20" height="18" viewBox="0 0 20 18"><path d="M0 6h4l6-6v18l-6-6H0z" fill="#fff" /><path d="M12 5q4 4 0 8M13 1q10 8 0 16" fill="none" stroke="#fff" strokeWidth="2" /></svg></VolBtn>
    <Time>14:14  /  1:07:57</Time>
    <Seek type="range" min={0} max={4077} defaultValue={854} aria-label="进度" />
    <PlayerText $gold>高清</PlayerText>
    <PlayerText>倍速</PlayerText>
    <PlayerText>字幕</PlayerText>
    <ExitBtn aria-label="退出全屏"><svg width="16" height="16" viewBox="0 0 16 16" fill="none" stroke="#fff" strokeWidth="2"><path d="M0 5h5V0M11 0v5h5M16 11h-5v5M5 16v-5H0" /></svg></ExitBtn>
  </Player>
);

export default function App() {
  return (
    <Page>
      <Global />
      <TabStrip />
      <RibbonBar />
      <Work>
        <ThumbPane />
        <EditorArea />
      </Work>
      <StatusBar />
      <Tasks />
      <Brand>
        <Swirl w={108} h={69} />
        <BrandEn>FEI TIAN QI QUAN</BrandEn>
        <BrandCn>飞   天   期   权</BrandCn>
      </Brand>
      <Bubble>14:13</Bubble>
      <Pointer width="18" height="26" viewBox="0 0 18 26"><path d="M1 1v18l4-3 4 8 4-2-4-8 6-1z" fill="#d62d12" stroke="#f3b9a8" /></Pointer>
      <BigPlay aria-label="播放视频"><svg width="20" height="24" viewBox="0 0 20 24"><path d="M1 0l19 12L1 24z" fill="#fff" /></svg></BigPlay>
      <Ime>
        <svg width="38" height="36" viewBox="0 0 38 36" fill="none" stroke="#1e96dc" strokeWidth="3"><path d="M2 10h34v16H2zM19 0v36" /></svg>
        <span>°,</span><span>半</span>
        <svg width="32" height="28" viewBox="0 0 32 28"><path d="M9 1q7 6 14 0l8 6-4 7-3-2v15H8V12l-3 2-4-7z" fill="#e4e4e4" /></svg>
      </Ime>
      <Watermark />
      <GreenIme>
        <Ico w={6} h={9} box="0 0 6 9" d="M0 1l3 2 3-2M0 5l3 2 3-2" />
        <ImeName>五笔拼音</ImeName>
        <Ico w={8} h={8} box="0 0 8 8"><circle cx="4" cy="4" r="4" fill="#fff" stroke="none" /></Ico>
        <span>°,</span>
      </GreenIme>
      <PlayerBar />
    </Page>
  );
}
